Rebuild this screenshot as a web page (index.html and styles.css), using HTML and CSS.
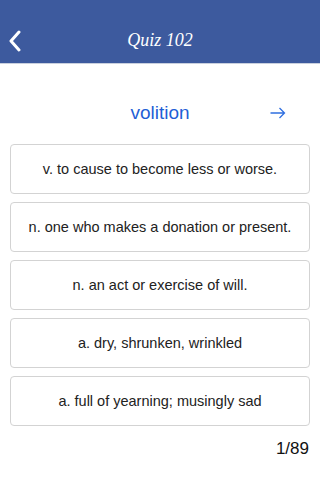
FILE: index.html
```html
<!DOCTYPE html>
<html>
<head>
<meta charset="utf-8">
<link rel="stylesheet" href="styles.css">
</head>
<body>
<div class="header">
  <div class="back">
    <svg width="14" height="22" viewBox="0 0 14 22"><path d="M11 2 L3 11 L11 20" fill="none" stroke="#fff" stroke-width="3" stroke-linecap="round" stroke-linejoin="round"/></svg>
  </div>
  <div class="title">Quiz 102</div>
</div>
<div class="word-row">
  <div class="word">volition</div>
  <div class="next">
    <svg width="16" height="12" viewBox="0 0 16 12"><path d="M0.5 6 H14.5 M9.5 1 L14.5 6 L9.5 11" fill="none" stroke="#2f6fe0" stroke-width="1.3"/></svg>
  </div>
</div>
<div class="options">
  <div class="option">v. to cause to become less or worse.</div>
  <div class="option">n. one who makes a donation or present.</div>
  <div class="option">n. an act or exercise of will.</div>
  <div class="option">a. dry, shrunken, wrinkled</div>
  <div class="option">a. full of yearning; musingly sad</div>
</div>
<div class="counter">1/89</div>
</body>
</html>
```
FILE: styles.css
```css
html, body {
  margin: 0;
  padding: 0;
  background: #ffffff;
  width: 320px;
  height: 480px;
  overflow: hidden;
  font-family: "Liberation Sans", Arial, sans-serif;
}
.header {
  height: 64px;
  background: #3d5a9e;
  border-bottom: 1px solid #c9d0de;
  box-sizing: border-box;
  display: flex;
  align-items: flex-end;
  position: relative;
  padding-bottom: 11px;
}
.back {
  width: 24px;
  padding-left: 8px;
  height: 22px;
  display: flex;
  align-items: center;
}
.title {
  position: absolute;
  left: 0;
  right: 0;
  bottom: 12px;
  text-align: center;
  color: #fff;
  font-family: "Liberation Serif", "Times New Roman", serif;
  font-style: italic;
  font-size: 18px;
  line-height: 22px;
}
.word-row {
  margin-top: 37px;
  height: 24px;
  position: relative;
  display: flex;
  justify-content: center;
  align-items: center;
}
.word {
  color: #1f5fd6;
  font-size: 19px;
}
.next {
  position: absolute;
  left: 270px;
  top: 6px;
  width: 16px;
  height: 12px;
  display: flex;
}
.options {
  margin: 19px 10px 0;
  display: flex;
  flex-direction: column;
  gap: 8px;
}
.option {
  height: 50px;
  box-sizing: border-box;
  border: 1px solid #d3d3d3;
  border-radius: 4px;
  display: flex;
  align-items: center;
  justify-content: center;
  font-size: 14.5px;
  color: #222;
}
.counter {
  margin-top: 12px;
  padding-right: 11px;
  text-align: right;
  font-size: 17px;
  color: #111;
  line-height: 22px;
}
```
